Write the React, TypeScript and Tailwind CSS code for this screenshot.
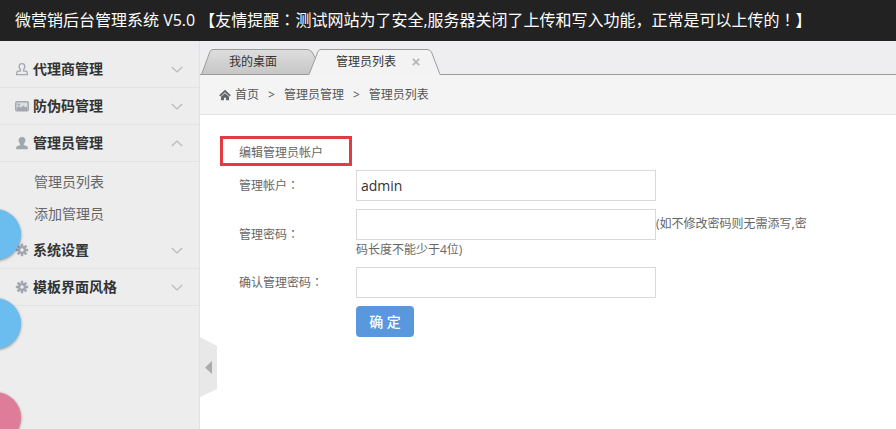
import React, { useState } from "react";

type IconName = "agent" | "picture" | "user" | "gear";

interface MenuGroup {
  title: string;
  icon: IconName;
  children: string[];
}

const menuGroups: MenuGroup[] = [
  { title: "代理商管理", icon: "agent", children: [] },
  { title: "防伪码管理", icon: "picture", children: [] },
  { title: "管理员管理", icon: "user", children: ["管理员列表", "添加管理员"] },
  { title: "系统设置", icon: "gear", children: [] },
  { title: "模板界面风格", icon: "gear", children: [] },
];

const MenuIcon: React.FC<{ name: IconName }> = ({ name }) => {
  if (name === "agent") {
    return (
      <svg viewBox="0 0 14 14" className="h-3.5 w-3.5 shrink-0" fill="none" stroke="#a3a8b0" strokeWidth="1.3">
        <path d="M7 1.6C5 1.6 4.2 2.8 4.2 4.4C4.2 5.8 5 7 5.4 7.6V9.2H3.2C2 9.2 1.6 10.2 1.6 12.6H12.4C12.4 10.2 12 9.2 10.8 9.2H8.6V7.6C9 7 9.8 5.8 9.8 4.4C9.8 2.8 9 1.6 7 1.6Z" />
      </svg>
    );
  }
  if (name === "picture") {
    return (
      <svg viewBox="0 0 14 14" className="h-3.5 w-3.5 shrink-0">
        <rect x="0.8" y="2.8" width="12.4" height="9" rx="1" fill="#dcdee1" stroke="#a3a8b0" strokeWidth="1.5" />
        <circle cx="3.9" cy="5.6" r="1.2" fill="#a3a8b0" />
        <path d="M2 11V8.6L4 7.2L6 8.8L8.2 6.6L10 8.2L12 7.8V11Z" fill="#a3a8b0" />
      </svg>
    );
  }
  if (name === "user") {
    return (
      <svg viewBox="0 0 14 14" className="h-3.5 w-3.5 shrink-0" fill="#9fa6b0">
        <path d="M7 1C4.6 1 3.6 2.3 3.6 4.3C3.6 5.9 4.3 7.1 5.2 7.9V9.2C3.4 9.6 1.2 9.9 1.2 11.6V13.2H12.8V11.6C12.8 9.9 10.6 9.6 8.8 9.2V7.9C9.7 7.1 10.4 5.9 10.4 4.3C10.4 2.3 9.4 1 7 1Z" />
      </svg>
    );
  }
  return (
    <svg viewBox="0 0 14 14" className="h-3.5 w-3.5 shrink-0">
      <g stroke="#a3a6b0" strokeWidth="2.5">
        <path d="M7 0.8V4.4M7 9.6V13.2M0.8 7H4.4M9.6 7H13.2M2.6 2.6L5.1 5.1M8.9 8.9L11.4 11.4M11.4 2.6L8.9 5.1M5.1 8.9L2.6 11.4" />
      </g>
      <circle cx="7" cy="7" r="2.8" fill="none" stroke="#a3a6b0" strokeWidth="2.2" />
    </svg>
  );
};

const Chevron: React.FC<{ open: boolean }> = ({ open }) => (
  <svg viewBox="0 0 12 7" className="ml-auto h-[7px] w-3" fill="none" stroke="#b9b9b9" strokeWidth="1.2">
    <path d={open ? "M0.8 6L6 1L11.2 6" : "M0.8 1L6 6L11.2 1"} />
  </svg>
);

// Full-width punctuation set in the middle of its cell
const Mark: React.FC<{ children: string }> = ({ children }) => (
  <span className="font-['Noto_Sans_CJK_JP',sans-serif]">{children}</span>
);

const Sidebar: React.FC = () => {
  const [openIndex, setOpenIndex] = useState(2);

  return (
    <nav className="w-[200px] shrink-0 border-r border-[#e2e2e2] bg-[#ededed] pt-[10px]">
      {menuGroups.map((group, index) => (
        <div key={group.title}>
          <button
            type="button"
            aria-expanded={openIndex === index}
            className="flex h-[37px] w-full items-center gap-1 border-b border-[#e2e2e2] pr-4 pl-[15px] text-sm font-bold text-[#333]"
            onClick={() => setOpenIndex(openIndex === index ? -1 : index)}
          >
            <MenuIcon name={group.icon} />
            {group.title}
            <Chevron open={openIndex === index} />
          </button>
          {openIndex === index && group.children.length > 0 && (
            <ul className="pt-1 pb-[2px]">
              {group.children.map((child) => (
                <li key={child}>
                  <a href="#" className="block pl-[34px] text-sm leading-8 text-[#666]">
                    {child}
                  </a>
                </li>
              ))}
            </ul>
          )}
        </div>
      ))}
    </nav>
  );
};

const TabBar: React.FC = () => (
  <div className="flex h-[34px] items-end border-b border-[#9c9c9c] bg-[#eeeef0] text-xs text-[#333]">
    <button type="button" className="relative -mb-px h-[26px] w-[116px] pr-[10px]">
      <svg viewBox="0 0 116 26" className="absolute inset-0 h-full w-full">
        <defs>
          <linearGradient id="idleTab" x1="0" y1="0" x2="0" y2="1">
            <stop offset="0" stopColor="#dedede" />
            <stop offset="1" stopColor="#c6c6c6" />
          </linearGradient>
        </defs>
        <path
          d="M0 25.5H1.5L10 2.5Q11 0.5 13 0.5H107Q110 0.5 112 3L116 10V25.5Z"
          fill="url(#idleTab)"
          stroke="#9c9c9c"
        />
      </svg>
      <span className="relative">我的桌面</span>
    </button>
    <button type="button" className="relative -mb-px -ml-2 h-[26px] w-[134px]">
      <svg viewBox="0 0 134 26" className="absolute inset-0 h-full w-full">
        <path d="M0 26L1 25.5L10 2.5Q11 0.5 13 0.5H119Q122 0.5 123.5 3L132 25.5L134 26Z" fill="#f3f3f3" />
        <path d="M0 25.5H1L10 2.5Q11 0.5 13 0.5H119Q122 0.5 123.5 3L132 25.5H134" fill="none" stroke="#9c9c9c" />
      </svg>
      <span className="relative flex items-center gap-4 pl-7">
        管理员列表
        <svg viewBox="0 0 8 8" className="h-2 w-2" stroke="#b5b5b5" strokeWidth="1.8">
          <path d="M0.8 0.8L7.2 7.2M7.2 0.8L0.8 7.2" />
        </svg>
      </span>
    </button>
  </div>
);

const Breadcrumb: React.FC = () => (
  <div className="flex h-10 items-center border-b border-[#e3e3e3] bg-[#f4f4f4] pl-[19px] text-xs text-[#555]">
    <svg viewBox="0 0 12 12" className="mr-1 h-3 w-3" fill="#5f6468">
      <path d="M6 0.8L0.2 6.2L1.4 7.5L6 3.3L10.6 7.5L11.8 6.2Z" />
      <path d="M6 4.2L2 7.8V11.2H4.9V8.8H7.1V11.2H10V7.8Z" />
    </svg>
    <a href="#">首页</a>
    <span className="px-[9px]">&gt;</span>
    <a href="#">管理员管理</a>
    <span className="px-[9px]">&gt;</span>
    <span>管理员列表</span>
  </div>
);

const inputClass =
  "h-[31px] w-[300px] border border-[#d9d9d9] bg-white px-1 align-middle text-sm text-[#333] outline-none";

const AdminForm: React.FC = () => {
  const [account, setAccount] = useState("admin");

  return (
    <form className="px-5 pt-[21px] text-xs text-[#666]" onSubmit={(e) => e.preventDefault()}>
      <h1 className="mb-1 flex h-[30px] w-[132px] items-end border-3 border-[#e23c40] px-4 leading-5">
        编辑管理员帐户
      </h1>
      <div className="grid max-w-[593px] grid-cols-[117px_1fr] items-center gap-y-2 pl-[19px]">
        <label htmlFor="account">
          管理帐户<Mark>：</Mark>
        </label>
        <div>
          <input
            id="account"
            type="text"
            className={inputClass}
            value={account}
            onChange={(e) => setAccount(e.target.value)}
          />
        </div>
        <label htmlFor="password">
          管理密码<Mark>：</Mark>
        </label>
        <div className="leading-[19px]">
          <input id="password" type="password" className={inputClass} />
          (如不修改密码则无需添写,密码长度不能少于4位)
        </div>
        <label htmlFor="confirm">
          确认管理密码<Mark>：</Mark>
        </label>
        <div>
          <input id="confirm" type="password" className={inputClass} />
        </div>
        <button
          type="submit"
          className="col-start-2 h-[31px] w-[58px] rounded bg-[#5a98de] text-sm font-medium text-white"
        >
          确 定
        </button>
      </div>
    </form>
  );
};

// Round shortcuts pinned to the left edge, half hidden
const FloatingShortcuts: React.FC = () => (
  <div className="pointer-events-none absolute inset-y-0 left-0 w-8 overflow-hidden">
    <span className="absolute top-[209px] -left-[30px] h-[51px] w-[51px] rounded-full bg-[#6bbcef] shadow-[0_1px_3px_rgba(0,0,0,0.4)]" />
    <span className="absolute top-[298px] -left-[30px] h-[51px] w-[51px] rounded-full bg-[#6bbcef] shadow-[0_1px_3px_rgba(0,0,0,0.4)]" />
    <span className="absolute top-[392px] -left-[30px] h-[51px] w-[51px] rounded-full bg-[#df7c9a] shadow-[0_1px_3px_rgba(0,0,0,0.4)]" />
  </div>
);

const App: React.FC = () => {
  return (
    <div className="relative flex min-h-screen flex-col bg-white font-['Open_Sans','Noto_Sans_CJK_SC',sans-serif]">
      <header className="h-[41px] shrink-0 bg-[#222] pl-[15px] text-base leading-[39px] whitespace-nowrap text-white">
        微营销后台管理系统 V5.0 【友情提醒<Mark>：</Mark>测试网站为了安全,服务器关闭了上传和写入功能，正常是可以上传的
        <Mark>！</Mark>】
      </header>
      <div className="flex grow">
        <Sidebar />
        <main className="relative min-w-0 grow">
          <TabBar />
          <Breadcrumb />
          <AdminForm />
          <button type="button" aria-label="收起菜单" className="absolute top-[296px] left-0 h-[60px] w-[17px]">
            <svg viewBox="0 0 17 60" className="h-full w-full">
              <path d="M0 0L17 9V52L0 60Z" fill="#e8e8e8" />
              <path d="M12 24V37L5 30.5Z" fill="#ababab" />
            </svg>
          </button>
        </main>
      </div>
      <FloatingShortcuts />
    </div>
  );
};

export default App;
